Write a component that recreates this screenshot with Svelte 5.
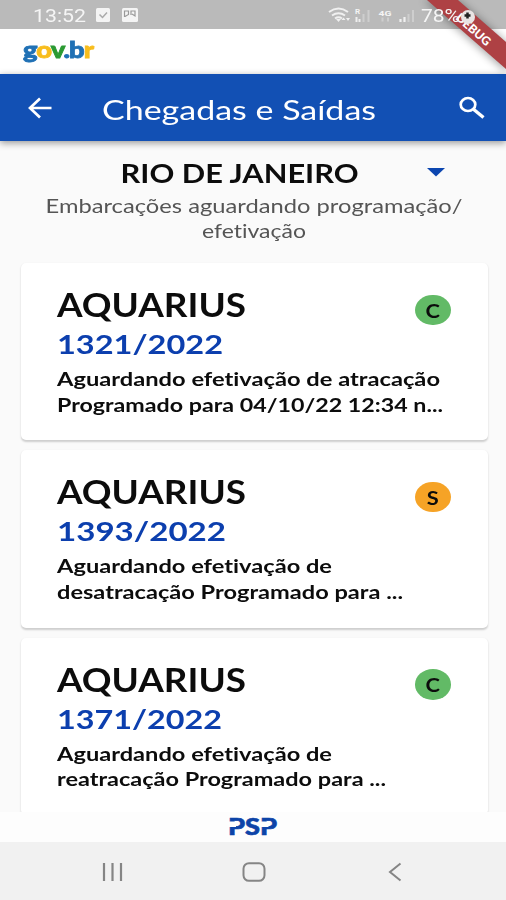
<script lang="ts">
  interface Arrival {
    ship: string;
    code: string;
    codeWidth: number;
    badge: "C" | "S";
    lines: { text: string; width: number }[];
  }

  const arrivals: Arrival[] = [
    {
      ship: "AQUARIUS",
      code: "1321/2022",
      codeWidth: 166,
      badge: "C",
      lines: [
        { text: "Aguardando efetivação de atracação", width: 383 },
        { text: "Programado para 04/10/22 12:34 n...", width: 386 },
      ],
    },
    {
      ship: "AQUARIUS",
      code: "1393/2022",
      codeWidth: 169,
      badge: "S",
      lines: [
        { text: "Aguardando efetivação de", width: 275 },
        { text: "desatracação Programado para ...", width: 346 },
      ],
    },
    {
      ship: "AQUARIUS",
      code: "1371/2022",
      codeWidth: 165,
      badge: "C",
      lines: [
        { text: "Aguardando efetivação de", width: 275 },
        { text: "reatracação Programado para ...", width: 329 },
      ],
    },
  ];

  // Stretches a line of text horizontally so it spans exactly `width` pixels.
  function fit(node: HTMLElement, width: number) {
    node.style.transform = `scaleX(${width / node.getBoundingClientRect().width})`;
  }
</script>

<div class="screen">
  <div class="status">
    <span class="clock"><span class="fit" use:fit={53}>13:52</span></span>
    <svg class="notes" width="44" height="16" viewBox="0 0 44 16">
      <rect x="0" y="1" width="14" height="14" rx="1.5" fill="#f4f4f4" />
      <path d="M3.5 7.5l3 3 4.5-5" fill="none" stroke="#aaa" stroke-width="1.5" />
      <rect x="26" y="1" width="16" height="14" rx="1.5" fill="#f4f4f4" />
      <path d="M28.5 10V4h4v3.5l-3.5 2M35 8V4h4v5l-3-2" fill="none" stroke="#999" stroke-width="1.2" />
    </svg>
    <svg class="signals" width="90" height="20" viewBox="328 5 90 20">
      <g fill="none" stroke="#f0f0f0" stroke-width="2">
        <path d="M329 12q9.5-7 19 0M332 15.5q6.5-4.5 13 0M335 18.5q3.5-2.5 7 0" />
      </g>
      <path d="M336 19h5l-2.5 3z" fill="#f0f0f0" />
      <path d="M341.5 20l2-2.5 2 2.5zM346 18h4l-2 3z" fill="#f0f0f0" />
      <text x="355" y="14" class="tiny">R</text>
      <path d="M356.5 22v-5M359.5 22v-3" stroke="#eee" stroke-width="2" />
      <path d="M363.5 22v-8M368.5 22V10" stroke="#cecece" stroke-width="2" />
      <text x="378.5" y="15.5" class="tiny" textLength="13" lengthAdjust="spacingAndGlyphs">4G</text>
      <path d="M382.5 17.5v4M388 17.5v4" stroke="#cecece" stroke-width="2" />
      <path d="M400.5 22v-3M404.5 22v-5" stroke="#f0f0f0" stroke-width="2.2" />
      <path d="M408.5 22v-8M413 22V10" stroke="#cecece" stroke-width="2" />
    </svg>
    <span class="battery"><span class="fit" use:fit={39}>78%</span></span>
    <svg class="gear" width="16" height="16" viewBox="0 0 16 16">
      <circle cx="8" cy="8" r="7" fill="#e9e4e4" />
      <path d="M7.5 3.5v6M4.5 6.5h6" stroke="#222" stroke-width="2.5" />
    </svg>
  </div>

  <div class="brand">
    <span class="govbr fit" use:fit={70}><i class="b">g</i><i class="y">o</i><i class="g">v</i><i class="b">.b</i><i class="y">r</i></span>
  </div>

  <header>
    <svg class="back" width="24" height="22" viewBox="0 0 24 22">
      <path d="M23.5 11H2M12 1.5L2 11l10 9.5" fill="none" stroke="#fff" stroke-width="2.7" />
    </svg>
    <h1><span class="fit" use:fit={274}>Chegadas e Saídas</span></h1>
    <svg class="search" width="26" height="24" viewBox="0 0 26 24">
      <ellipse cx="9" cy="8.5" rx="7.3" ry="6.5" fill="none" stroke="#fff" stroke-width="2.7" />
      <path d="M14.5 13.2L24.5 21.5" stroke="#fff" stroke-width="3.4" />
    </svg>
  </header>

  <main>
    <div class="port">
      <h2><span class="fit mid" use:fit={238}>RIO DE JANEIRO</span></h2>
      <svg class="caret" width="18" height="9" viewBox="0 0 18 9"><path d="M0 0h18L9 8.5z" fill="#0c46b0" /></svg>
    </div>
    <p class="sub">
      <span class="fit mid" use:fit={417}>Embarcações aguardando programação/</span>
      <span class="fit mid" use:fit={104}>efetivação</span>
    </p>

    <div class="list">
      {#each arrivals as item (item.code)}
        <article>
          <div class="info">
            <h3><span class="fit" use:fit={189}>{item.ship}</span></h3>
            <div class="code"><span class="fit" use:fit={item.codeWidth}>{item.code}</span></div>
            {#each item.lines as line}
              <div class="desc"><span class="fit" use:fit={line.width}>{line.text}</span></div>
            {/each}
          </div>
          <div class="badge" class:orange={item.badge === "S"}><span>{item.badge}</span></div>
        </article>
      {/each}
    </div>
  </main>

  <footer>
    <svg width="54" height="28" viewBox="227 813 54 28">
      <text x="229" y="834.5" class="psp" textLength="49" lengthAdjust="spacingAndGlyphs">PSP</text>
      <!-- the stems of both Ps are broken under the top bar -->
      <path d="M228 821.5h9v5.5h-9zM260.8 821.5h8.7v5.5h-8.7z" fill="#fdfdfd" />
    </svg>
  </footer>

  <nav>
    <svg width="22" height="20" viewBox="0 0 22 20"><path d="M3 1v18M11.5 1v18M20 1v18" stroke="#858585" stroke-width="2.2" /></svg>
    <svg class="home" width="24" height="20" viewBox="0 0 24 20"><rect x="1.5" y="1.2" width="21" height="17.6" rx="5.5" fill="none" stroke="#858585" stroke-width="2" /></svg>
    <svg width="14" height="20" viewBox="0 0 14 20"><path d="M12.5 1.5L2 10l10.5 8.5" fill="none" stroke="#858585" stroke-width="2" /></svg>
  </nav>

  <svg class="ribbon" width="106" height="90" viewBox="400 0 106 90">
    <defs>
      <filter id="soft" x="-20%" y="-20%" width="140%" height="140%"><feGaussianBlur stdDeviation="4" /></filter>
    </defs>
    <path d="M424 0h34l50 44v29z" fill="#000" opacity=".35" filter="url(#soft)" />
    <path d="M427 0h31l48 42v27z" fill="#ae4144" />
    <text transform="translate(473.5 29.5) rotate(41.5)" y="4.3" class="debug" textLength="42" lengthAdjust="spacingAndGlyphs">DEBUG</text>
  </svg>
</div>

<style>
  :global(body) {
    margin: 0;
  }

  .screen {
    position: relative;
    display: flex;
    flex-direction: column;
    width: 506px;
    height: 900px;
    overflow: hidden;
    background: #fafafa;
    font-family: Lato, "Open Sans", sans-serif;
    font-variant-ligatures: none;
    color: #0c0c0c;
  }

  h1,
  h2,
  h3,
  p {
    margin: 0;
    font-weight: inherit;
  }

  svg {
    display: block;
    flex: none;
  }

  .fit {
    display: inline-block;
    white-space: nowrap;
    transform-origin: left center;
  }

  .fit.mid {
    transform-origin: center;
  }

  .status {
    flex: none;
    display: flex;
    align-items: center;
    height: 29px;
    padding-left: 33px;
    background: #bababa;
    color: #f5f5f5;
    font-family: Roboto, sans-serif;
    font-size: 18px;
  }

  .clock {
    width: 63px;
    padding-top: 2px;
  }

  .notes {
    margin-right: 188px;
  }

  .signals {
    margin-right: 3px;
  }

  .battery {
    position: relative;
    z-index: 4;
    width: 40px;
    padding-top: 2px;
  }

  .gear {
    position: relative;
    z-index: 4;
    margin: 4px 0 0 -1px;
  }

  .tiny {
    font: bold 8px Roboto, sans-serif;
    fill: #f4f4f4;
  }

  .brand {
    flex: none;
    height: 45px;
    padding-left: 22.5px;
    box-sizing: border-box;
    background: #fff;
  }

  .govbr {
    font-size: 23px;
    font-weight: 900;
    line-height: 40px;
    letter-spacing: -0.8px;
    -webkit-text-stroke: 0.8px currentColor;
  }

  .govbr i {
    font-style: normal;
    -webkit-text-stroke-color: currentColor;
  }

  .govbr .b {
    color: #2071b5;
  }

  .govbr .y {
    color: #f8bd1c;
  }

  .govbr .g {
    color: #2b9a32;
  }

  header {
    position: relative;
    z-index: 1;
    flex: none;
    display: flex;
    height: 67px;
    background: #1250b4;
    color: #fff;
    box-shadow: 0 2px 7px rgba(0, 0, 0, 0.4);
  }

  .back {
    margin: 23px 0 0 28px;
  }

  h1 {
    width: 357px;
    margin: 4px 0 0 50px;
    font-size: 27px;
    line-height: 64px;
  }

  .search {
    margin-top: 22px;
  }

  main {
    flex: 1;
    min-height: 0;
    overflow: hidden;
  }

  .port {
    display: flex;
    align-items: center;
    height: 29px;
    padding: 17px 0 6px;
  }

  h2 {
    width: 479px;
    margin-right: -52px;
    padding-top: 2px;
    text-align: center;
    font-size: 26px;
    font-weight: 700;
    line-height: 29px;
  }

  .sub {
    display: flex;
    flex-direction: column;
    align-items: center;
    color: #555;
    font-size: 19px;
    line-height: 25px;
    padding-left: 2px;
  }

  .list {
    display: flex;
    flex-direction: column;
    gap: 10px;
    padding: 20px 18px 0 20.5px;
  }

  article {
    display: flex;
    justify-content: space-between;
    box-sizing: border-box;
    height: 177.4px;
    padding: 23px 37.5px 0 36px;
    border-radius: 5px;
    background: #fff;
    box-shadow: 0 1.5px 2px rgba(0, 0, 0, 0.18);
  }

  .info {
    width: 0;
  }

  h3 {
    font-size: 32px;
    font-weight: 700;
    line-height: 38px;
  }

  .code {
    margin: 2px 0 5px;
    color: #0c3fae;
    font-size: 26.5px;
    font-weight: 700;
    line-height: 36px;
  }

  .desc {
    font-size: 18px;
    font-weight: 700;
    line-height: 25.5px;
  }

  .badge {
    width: 35.5px;
    height: 30.5px;
    margin-top: 8.5px;
    border-radius: 50%;
    background: #62ba66;
    font-size: 19px;
    font-weight: 700;
    line-height: 31.5px;
    text-align: center;
  }

  .badge span {
    display: block;
    transform: scaleX(1.15);
  }

  .badge.orange {
    background: #f6a326;
  }

  footer {
    flex: none;
    display: flex;
    justify-content: center;
    height: 30px;
    background: #fdfdfd;
  }

  footer svg {
    margin-top: 1px;
  }

  .psp {
    font: 900 23px Lato, sans-serif;
    fill: #0d44a8;
    stroke: #0d44a8;
    stroke-width: 0.6px;
  }

  nav {
    flex: none;
    display: flex;
    justify-content: space-between;
    align-items: center;
    box-sizing: border-box;
    height: 58px;
    padding: 1px 104px 0 101px;
    background: #f1f1f1;
  }

  .home {
    margin-right: 4px;
  }

  .ribbon {
    position: absolute;
    top: 0;
    right: 0;
    z-index: 3;
  }

  .debug {
    font: 900 12px Lato, sans-serif;
    fill: #fff;
    text-anchor: middle;
  }
</style>
